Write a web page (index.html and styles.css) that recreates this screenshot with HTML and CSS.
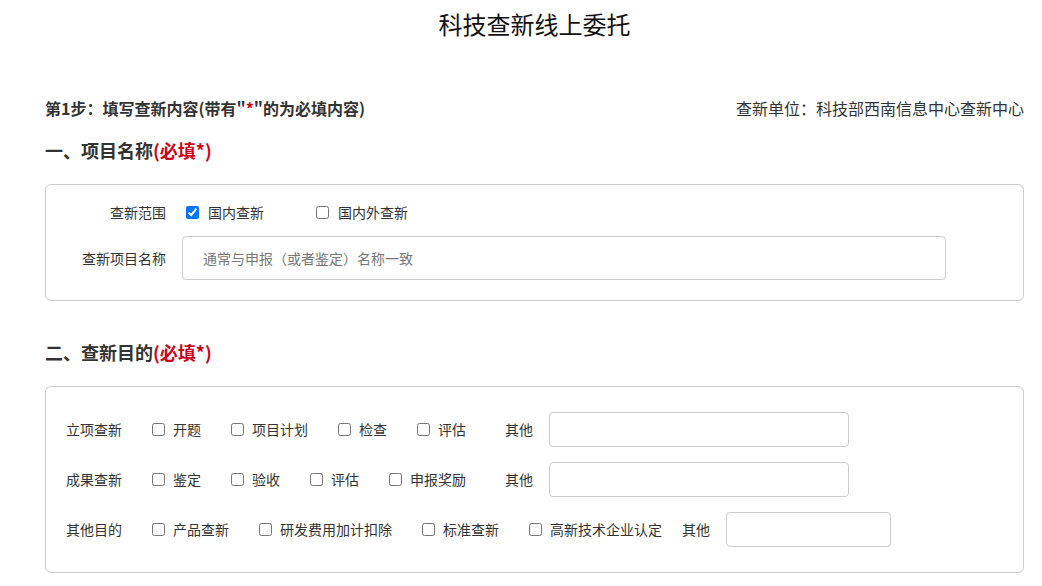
FILE: index.html
```html
<!DOCTYPE html>
<html lang="zh-CN">
<head>
    <meta charset="UTF-8">
    <meta name="viewport" content="width=device-width, initial-scale=1.0">
    <title>科技查新线上委托</title>
    <link rel="stylesheet" href="styles.css">
</head>
<body>
    <div class="page">
        <h1 class="title">科技查新线上委托</h1>

        <div class="step">
            <span class="step-text">第1步：填写查新内容(带有"<em>*</em>"的为必填内容)</span>
            <span class="unit">查新单位：科技部西南信息中心查新中心</span>
        </div>

        <h2 class="section-title">一、项目名称<em>(必填*)</em></h2>
        <div class="box box-name">
            <div class="row">
                <label class="row-label">查新范围</label>
                <div class="scope">
                    <label class="scope-item"><input type="checkbox" checked>国内查新</label>
                    <label class="scope-item"><input type="checkbox">国内外查新</label>
                </div>
            </div>
            <div class="row row-input">
                <label class="row-label" for="projName">查新项目名称</label>
                <input type="text" id="projName" class="text-input name-input" placeholder="通常与申报（或者鉴定）名称一致">
            </div>
        </div>

        <h2 class="section-title second">二、查新目的<em>(必填*)</em></h2>
        <div class="box box-purpose">
            <div class="purpose-row">
                <span class="purpose-label">立项查新</span>
                <div class="opts short">
                    <label class="opt"><input type="checkbox">开题</label>
                    <label class="opt"><input type="checkbox">项目计划</label>
                    <label class="opt"><input type="checkbox">检查</label>
                    <label class="opt"><input type="checkbox">评估</label>
                </div>
                <span class="other-label">其他</span>
                <input type="text" class="text-input other-input">
            </div>
            <div class="purpose-row">
                <span class="purpose-label">成果查新</span>
                <div class="opts short">
                    <label class="opt"><input type="checkbox">鉴定</label>
                    <label class="opt"><input type="checkbox">验收</label>
                    <label class="opt"><input type="checkbox">评估</label>
                    <label class="opt"><input type="checkbox">申报奖励</label>
                </div>
                <span class="other-label">其他</span>
                <input type="text" class="text-input other-input">
            </div>
            <div class="purpose-row">
                <span class="purpose-label">其他目的</span>
                <div class="opts">
                    <label class="opt"><input type="checkbox">产品查新</label>
                    <label class="opt"><input type="checkbox">研发费用加计扣除</label>
                    <label class="opt"><input type="checkbox">标准查新</label>
                    <label class="opt"><input type="checkbox">高新技术企业认定</label>
                </div>
                <span class="other-label">其他</span>
                <input type="text" class="text-input other-input small">
            </div>
        </div>
    </div>
</body>
</html>
```

FILE: styles.css
```css
body {
    margin: 0;
    padding: 0;
    background-color: #fff;
    color: #333;
    font-family: "Noto Sans CJK SC", "Noto Sans", sans-serif;
    font-size: 14px;
}

.page {
    padding: 0 18px 0 45px;
}

.title {
    margin: 0;
    text-align: center;
    font-size: 24px;
    font-weight: normal;
    line-height: 48px;
    color: #111;
}

.step {
    display: flex;
    justify-content: space-between;
    align-items: center;
    margin-top: 48px;
    line-height: 24px;
}

.step-text {
    font-size: 16px;
    font-weight: bold;
    color: #333;
}

.step-text em {
    font-style: normal;
    color: #d0021b;
}

.unit {
    font-size: 16px;
    color: #333;
}

.section-title {
    margin: 17px 0 0;
    font-size: 18px;
    line-height: 26px;
    font-weight: bold;
    color: #333;
}

.section-title em {
    font-style: normal;
    color: #d0021b;
}

.section-title.second {
    margin-top: 38px;
}

.box {
    margin-top: 21px;
    border: 1px solid #ccc;
    border-radius: 6px;
}

.box-name {
    padding: 16px 0 20px;
}

.row {
    display: flex;
    align-items: center;
    line-height: 22px;
}

.row-input {
    margin-top: 13px;
}

.row-label {
    width: 120px;
    text-align: right;
    padding-right: 16px;
}

.scope {
    display: flex;
}

.scope-item {
    display: flex;
    align-items: center;
    margin-right: 48px;
}

.scope-item input {
    margin: 0 9px 0 4px;
    width: 13px;
    height: 13px;
}

.text-input {
    box-sizing: border-box;
    border: 1px solid #ccc;
    border-radius: 4px;
    font-family: inherit;
    font-size: 14px;
    color: #333;
    outline: none;
}

.name-input {
    width: 764px;
    height: 44px;
    padding: 0 20px;
}

.name-input::placeholder {
    color: #777;
}

.box-purpose {
    padding: 25px 20px 26px;
    display: flex;
    flex-direction: column;
    gap: 16px;
}

.purpose-row {
    display: flex;
    align-items: center;
    height: 34px;
}

.purpose-label {
    width: 86px;
}

.opts {
    display: flex;
    gap: 30px;
}

.opts.short {
    min-width: 333px;
}

.opt {
    display: flex;
    align-items: center;
}

.opt input {
    margin: 0 8px 0 0;
    width: 13px;
    height: 13px;
}

.other-label {
    margin-left: 20px;
    margin-right: 16px;
}

.other-input {
    width: 300px;
    height: 35px;
}

.other-input.small {
    width: 165px;
}
```
